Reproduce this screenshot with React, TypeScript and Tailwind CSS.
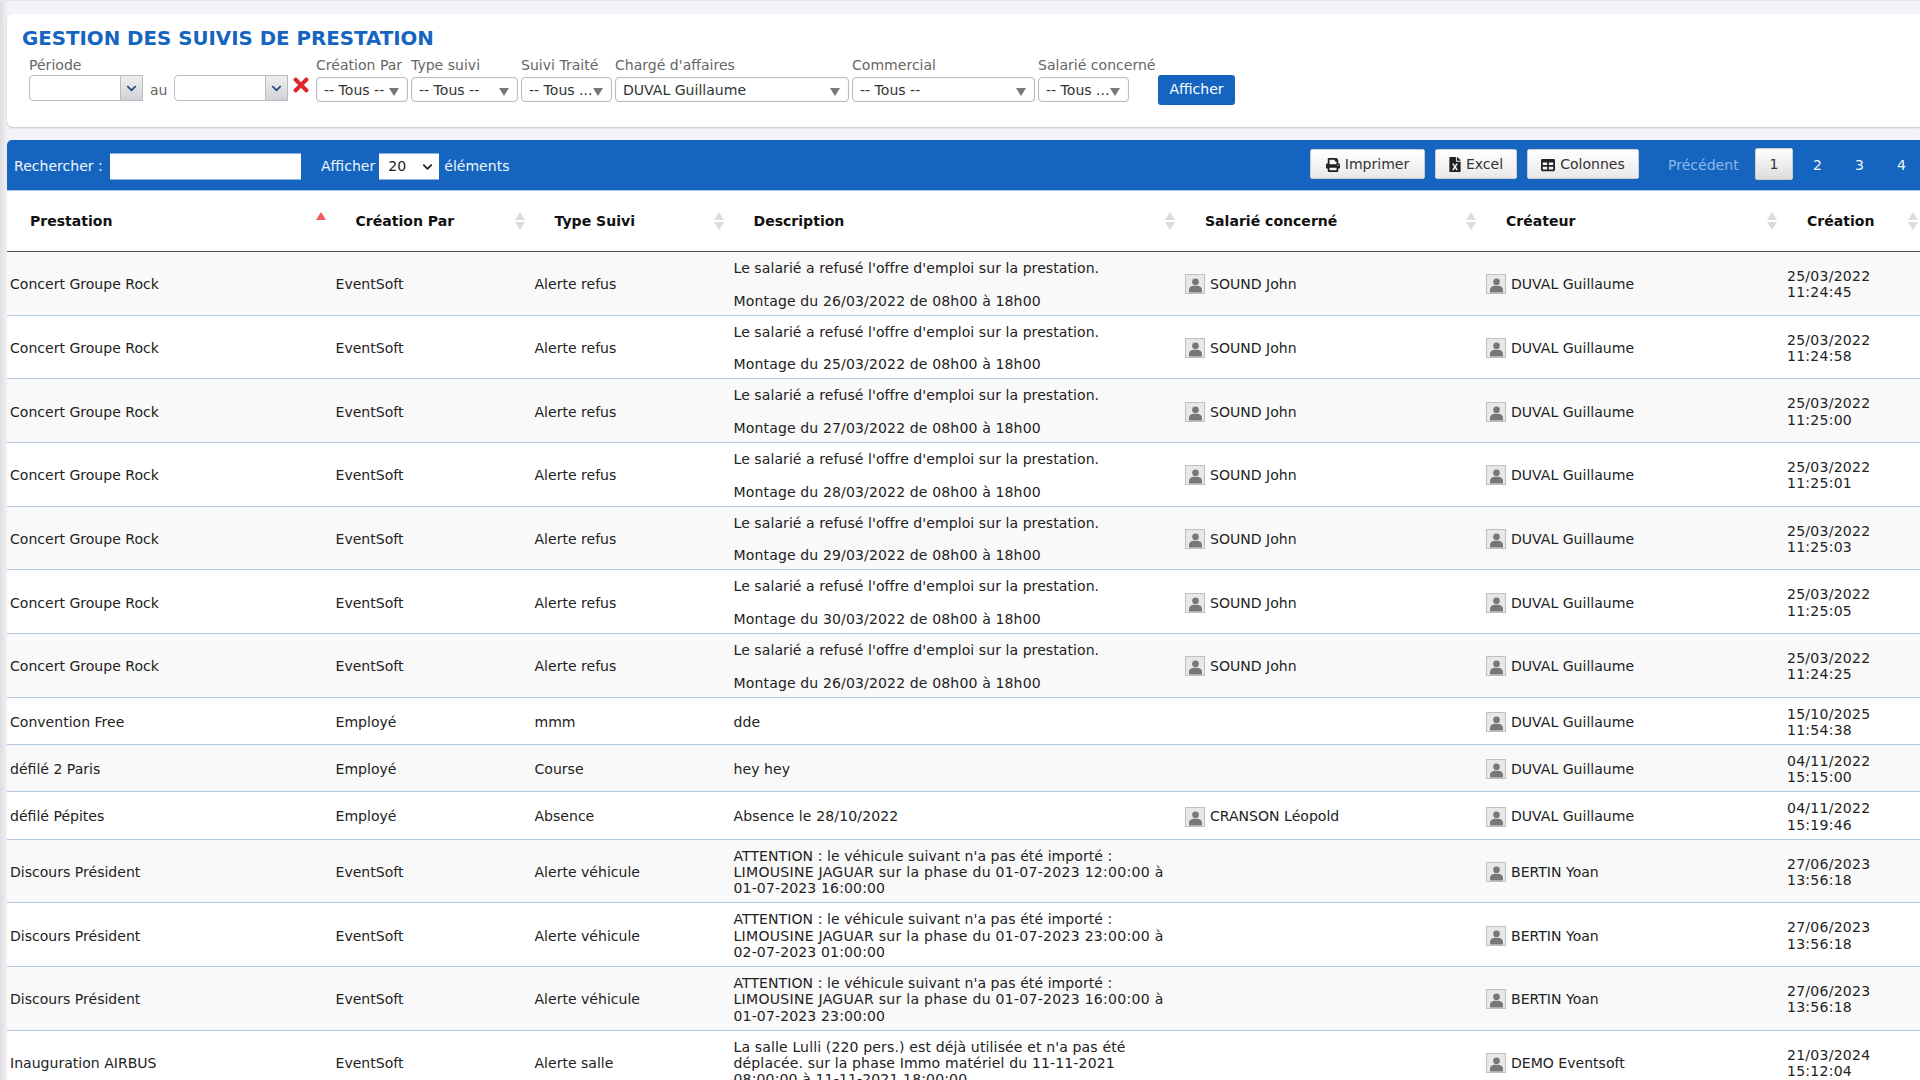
import { FaChevronDown, FaFileExcel, FaPrint, FaTable, FaTimes } from 'react-icons/fa';

const FONT = "font-['DejaVu_Sans',Verdana,sans-serif]";

interface Row {
    prestation: string;
    par: string;
    type: string;
    description: string[];
    salarie?: string;
    createur: string;
    date: string;
    heure: string;
}

const refus = (jour: string, heure: string): Row => ({
    prestation: 'Concert Groupe Rock',
    par: 'EventSoft',
    type: 'Alerte refus',
    description: ["Le salarié a refusé l'offre d'emploi sur la prestation.", '', `Montage du ${jour}/03/2022 de 08h00 à 18h00`],
    salarie: 'SOUND John',
    createur: 'DUVAL Guillaume',
    date: '25/03/2022',
    heure,
});

const vehicule = (debut: string, fin: string): Row => ({
    prestation: 'Discours Président',
    par: 'EventSoft',
    type: 'Alerte véhicule',
    description: ["ATTENTION : le véhicule suivant n'a pas été importé :", `LIMOUSINE JAGUAR sur la phase du ${debut} à`, fin],
    createur: 'BERTIN Yoan',
    date: '27/06/2023',
    heure: '13:56:18',
});

const rows: Row[] = [
    refus('26', '11:24:45'),
    refus('25', '11:24:58'),
    refus('27', '11:25:00'),
    refus('28', '11:25:01'),
    refus('29', '11:25:03'),
    refus('30', '11:25:05'),
    refus('26', '11:24:25'),
    { prestation: 'Convention Free', par: 'Employé', type: 'mmm', description: ['dde'], createur: 'DUVAL Guillaume', date: '15/10/2025', heure: '11:54:38' },
    { prestation: 'défilé 2 Paris', par: 'Employé', type: 'Course', description: ['hey hey'], createur: 'DUVAL Guillaume', date: '04/11/2022', heure: '15:15:00' },
    { prestation: 'défilé Pépites', par: 'Employé', type: 'Absence', description: ['Absence le 28/10/2022'], salarie: 'CRANSON Léopold', createur: 'DUVAL Guillaume', date: '04/11/2022', heure: '15:19:46' },
    vehicule('01-07-2023 12:00:00', '01-07-2023 16:00:00'),
    vehicule('01-07-2023 23:00:00', '02-07-2023 01:00:00'),
    vehicule('01-07-2023 16:00:00', '01-07-2023 23:00:00'),
    {
        prestation: 'Inauguration AIRBUS',
        par: 'EventSoft',
        type: 'Alerte salle',
        description: ["La salle Lulli (220 pers.) est déjà utilisée et n'a pas été", 'déplacée. sur la phase Immo matériel du 11-11-2021', '08:00:00 à 11-11-2021 18:00:00'],
        createur: 'DEMO Eventsoft',
        date: '21/03/2024',
        heure: '15:12:04',
    },
];

const columns = [
    { name: 'Prestation', width: 'w-[325.5px]', active: true },
    { name: 'Création Par', width: 'w-[199px]' },
    { name: 'Type Suivi', width: 'w-[199px]' },
    { name: 'Description', width: 'w-[451.5px]' },
    { name: 'Salarié concerné', width: 'w-[301px]' },
    { name: 'Créateur', width: 'w-[301px]' },
    { name: 'Création', width: 'w-[141px]' },
];

const lineTracking = (line: string) => {
    if (/\d{4} \d{2}:.* à$/.test(line)) return 'tracking-[0.27px]';
    if (/\d/.test(line)) return 'tracking-[0.13px]';
    return 'tracking-[0.06px]';
};

function FilterSelect({ label, value, width }: { label: string; value: string; width: string }) {
    return (
        <div className={`flex flex-col shrink-0 ${width}`}>
            <span className="h-4 leading-4 text-[#666] whitespace-nowrap">{label}</span>
            <div className="relative mt-1 h-[25px] rounded-[4px] border border-[#bbb] shadow-[inset_0_0_1px_#ccc] bg-white pl-[7px] leading-[24px] text-[#333] whitespace-nowrap overflow-hidden">
                {value}
                <svg viewBox="0 0 10 8" className="absolute right-[8px] top-[10px] w-[10px] h-[8px] fill-[#777]">
                    <path d="M0 0h10L5 8z" />
                </svg>
            </div>
        </div>
    );
}

function DateField() {
    return (
        <div className="flex w-[114px] h-[26px] shrink-0">
            <div className="flex-1 rounded-l-[4px] border border-[#bbb] bg-white" />
            <div className="flex w-[22px] items-center justify-center border border-l-0 border-[#bbb] bg-gradient-to-b from-[#eee] to-[#cfd3d8]">
                <FaChevronDown className="w-[11px] h-[11px] text-[#2a4a80]" />
            </div>
        </div>
    );
}

function ToolButton({ icon, label, width }: { icon: React.ReactNode; label: string; width: string }) {
    return (
        <button className={`flex h-[30px] items-center justify-center gap-[5px] rounded-[2px] border border-[#ccc] bg-gradient-to-b from-white to-[#e9e9e9] pt-[1px] text-[#333] ${width}`}>
            {icon}
            {label}
        </button>
    );
}

function SortArrows({ active }: { active?: boolean }) {
    return (
        <svg viewBox="0 0 10 18" className="absolute right-[7px] top-[21px] w-[10px] h-[18px]">
            <path d="M5 0l5 8H0z" className={active ? 'fill-[#f25a63]' : 'fill-[#dcdcdc]'} />
            {!active && <path d="M5 18l5-8H0z" className="fill-[#dcdcdc]" />}
        </svg>
    );
}

function Person({ name }: { name?: string }) {
    if (!name) return null;
    return (
        <div className="flex items-center gap-[5px]">
            <span className="flex w-[20px] h-[20px] items-end justify-center border border-[#c0c0c0] bg-[#e8e8e8]">
                <svg viewBox="0 0 14 16" className="w-[13px] h-[16px] fill-[#777]">
                    <circle cx="7" cy="4.5" r="3.6" />
                    <path d="M0 16v-3c0-2.5 2.5-4 5-4.2h4c2.5.2 5 1.7 5 4.2v3z" />
                </svg>
            </span>
            <span>{name}</span>
        </div>
    );
}

export default function App() {
    return (
        <div className={`${FONT} w-[1920px] h-[1080px] overflow-hidden bg-[linear-gradient(90deg,#dfdfe2,#f1f1f4_7px,#f3f4f8_7px)] pl-[7px] pt-[13px] text-[14.05px] text-[#222] border-t border-[#e4e5e9]`}>
            <div className="h-[113px] rounded-l-[6px] bg-white shadow-[0_1px_2px_rgba(0,0,0,0.2)] pl-[15px]">
                <h1 className="pt-[13px] h-[43px] leading-[24px] text-[19.8px] font-bold text-[#1565c0] whitespace-nowrap">
                    GESTION DES SUIVIS DE PRESTATION
                </h1>
                <div className="flex items-start pl-[7px]">
                    <div className="flex flex-col w-[287px] shrink-0">
                        <span className="h-4 leading-4 text-[#666]">Période</span>
                        <div className="flex mt-[2px]">
                            <DateField />
                            <span className="w-[31px] pl-[7px] leading-[30px] text-[#666]">au</span>
                            <DateField />
                            <FaTimes className="ml-[2px] -mt-[1px] w-[22px] h-[22px] text-[#e0262c]" />
                        </div>
                    </div>
                    <div className="flex gap-[3px]">
                        <FilterSelect label="Création Par" value="-- Tous --" width="w-[92px]" />
                        <FilterSelect label="Type suivi" value="-- Tous --" width="w-[107px]" />
                        <FilterSelect label="Suivi Traité" value="-- Tous ..." width="w-[91px]" />
                        <FilterSelect label="Chargé d'affaires" value="DUVAL Guillaume" width="w-[234px]" />
                        <FilterSelect label="Commercial" value="-- Tous --" width="w-[183px]" />
                        <FilterSelect label="Salarié concerné" value="-- Tous ..." width="w-[91px]" />
                    </div>
                    <button className="ml-[29px] mt-[18px] w-[77px] h-[30px] rounded-[3px] bg-[#1565c0] text-white">Afficher</button>
                </div>
            </div>

            <div className="mt-[13px] flex h-[51px] items-center rounded-tl-[5px] border-b border-[#a8c8ec] bg-[#1565c0] pl-[7px] pr-[2px] text-[#f0f5fb]">
                <div className="flex items-center translate-y-[1.5px]">
                    <span className="w-[96px]">Rechercher :</span>
                    <div className="w-[191px] h-[26px] bg-white" />
                    <span className="ml-[20px]">Afficher</span>
                    <div className="ml-[4px] flex w-[60px] h-[26px] items-center justify-between bg-white pl-[9px] pr-[6px] text-[#222]">
                        20
                        <FaChevronDown className="w-[11px] h-[11px] text-[#222]" />
                    </div>
                    <span className="ml-[5px]">éléments</span>
                </div>

                <div className="ml-auto flex gap-[10px] -translate-y-[1px]">
                    <ToolButton icon={<FaPrint className="w-[14px] h-[14px] text-[#222]" />} label="Imprimer" width="w-[115px]" />
                    <ToolButton icon={<FaFileExcel className="w-[12px] h-[15px] text-[#222]" />} label="Excel" width="w-[82px]" />
                    <ToolButton icon={<FaTable className="w-[14px] h-[14px] text-[#222]" />} label="Colonnes" width="w-[112px]" />
                </div>
                <span className="ml-[29px] w-[87px] translate-y-[1px] text-[#8fb8e6]">Précédent</span>
                <button className="w-[38px] h-[32px] -translate-y-[1px] rounded-[2px] border border-[#ccc] bg-gradient-to-b from-white to-[#dcdcdc] pt-[2px] text-[#333]">1</button>
                <span className="w-[42px] pl-[20px] translate-y-[1px]">2</span>
                <span className="w-[42px] pl-[20px] translate-y-[1px]">3</span>
                <span className="w-[41px] pl-[20px] translate-y-[1px]">4</span>
            </div>

            <table className="table-fixed w-[1918px] border-separate border-spacing-0">
                <thead>
                    <tr>
                        {columns.map(col => (
                            <th key={col.name} className={`${col.width} relative h-[61px] bg-white border-b-[1.5px] border-[#555] pl-[23px] pt-[2px] text-left font-bold text-[#111]`}>
                                {col.name}
                                <SortArrows active={col.active} />
                            </th>
                        ))}
                    </tr>
                </thead>
                <tbody>
                    {rows.map((row, idx) => {
                        const cell = 'border-b border-[#b4c8e0] pl-[3px] pt-[7.85px] pb-[5.85px] align-middle leading-[16.33px]';
                        return (
                            <tr key={idx} className={idx % 2 === 0 ? 'bg-[#f9f9f9]' : 'bg-white'}>
                                <td className={cell}>{row.prestation}</td>
                                <td className={cell}>{row.par}</td>
                                <td className={cell}>{row.type}</td>
                                <td className={cell}>
                                    {row.description.map((line, i) => (
                                        <div key={i} className={`h-[16.33px] whitespace-nowrap ${lineTracking(line)}`}>{line}</div>
                                    ))}
                                </td>
                                <td className={cell}><Person name={row.salarie} /></td>
                                <td className={cell}><Person name={row.createur} /></td>
                                <td className={`${cell} tracking-[0.24px]`}>
                                    <div>{row.date}</div>
                                    <div>{row.heure}</div>
                                </td>
                            </tr>
                        );
                    })}
                </tbody>
            </table>
        </div>
    );
}
